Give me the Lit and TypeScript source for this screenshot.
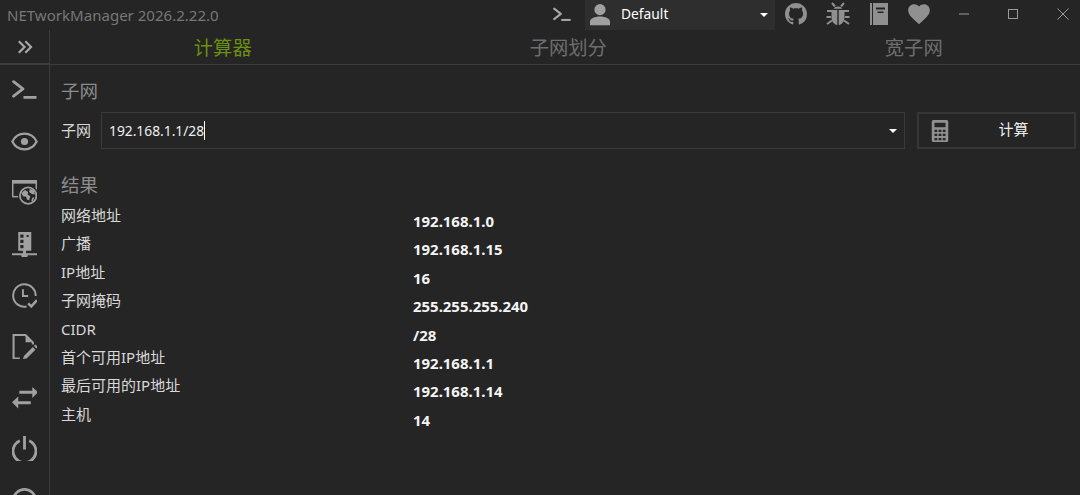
import { LitElement, html, css, svg } from "lit";
import { customElement } from "lit/decorators.js";

const icon = (body: unknown, cls = "", vb = "0 0 24 24") =>
  html`<svg class=${cls} viewBox=${vb} aria-hidden="true">${body}</svg>`;

const consoleIcon = svg`<path d="M1.5 3.5 10.5 10.5 1.5 17.5" fill="none" stroke="currentColor" stroke-width="2.7" stroke-linecap="round" stroke-linejoin="round"/><path d="M11 18.6H23.5" fill="none" stroke="currentColor" stroke-width="2.7"/>`;
const eye = svg`<path d="M1.2 12C3.5 7.3 7.3 5 12 5s8.500 2.300 10.800 7c-2.300 4.700-6.100 7-10.800 7S3.500 16.700 1.200 12Z" fill="none" stroke="currentColor" stroke-width="2"/><circle cx="12" cy="12" r="3.200" fill="currentColor"/>`;
const netGlobe = svg`<path d="M.7 16.500V.7H23.300V9" fill="none" stroke="currentColor" stroke-width="1.400"/><path d="M.7 16H7" fill="none" stroke="currentColor" stroke-width="1.400"/><path d="M0 0H24V3.500H0Z" fill="currentColor"/><circle cx="15.500" cy="15" r="9.800" fill="#252525"/><circle cx="15.500" cy="15" r="7.900" fill="none" stroke="currentColor" stroke-width="1.700"/><path d="M9 12.500l3.500-3 3 2-.5 2.500 2.500 1.500-1 4-2-.5-1-3-3-.5ZM17 8.500l4 1.500 1 4-3-.5-2.500-2ZM19.500 17l2-.5-1.500 4-1.500-.5Z" fill="currentColor"/>`;
const server = svg`<path d="M6 0H18.500V18H13.500V20.300H24V22.300H15A3 3 0 0 1 9 22.300H0V20.300H10.500V18H6ZM8 2.500V5.500H11V2.500ZM14 2.800V4.800H16V2.800ZM8 7.500V10.500H11V7.500ZM8 12.500V15.500H11V12.500Z" fill="currentColor" fill-rule="evenodd"/>`;
const clockCheck = svg`<path d="M14 22.600A10.800 10.800 0 1 1 22.700 12.500" fill="none" stroke="currentColor" stroke-width="1.900"/><path d="M10.500 6V12.500H15.500" fill="none" stroke="currentColor" stroke-width="1.800"/><path d="M15.500 19.500 18.500 22.500 24 16.500" fill="none" stroke="currentColor" stroke-width="2.400"/>`;
const fileEdit = svg`<path d="M7.500 23.500H1.500V1H13L20 8V10" fill="none" stroke="currentColor" stroke-width="2"/><path d="M13 1V8H20Z" fill="currentColor"/><path d="M10.500 24 11.500 21 20 12.500 22.500 15 14 23.500ZM21 11.500 22.500 10 25 12.500 23.500 14Z" fill="currentColor"/>`;
const swap = svg`<path d="M19.500 2V5.500H7V8.500H19.500V12.500L25 7ZM6 11 0 16.500 6 22.500V18.500H18V15.500H6Z" fill="currentColor"/>`;
const power = svg`<path d="M7.500 4.500A11 11 0 1 0 16.500 4.500" fill="none" stroke="currentColor" stroke-width="2.700"/><path d="M12 0V13" fill="none" stroke="currentColor" stroke-width="2.700"/>`;
const info = svg`<circle cx="12" cy="12" r="10.700" fill="none" stroke="currentColor" stroke-width="2.600"/>`;
const chevrons = svg`<path d="M5.590,7.410L7,6L13,12L7,18L5.590,16.590L10.170,12L5.590,7.410M11.590,7.410L13,6L19,12L13,18L11.590,16.590L16.170,12L11.590,7.410Z" fill="currentColor"/>`;
const account = svg`<path d="M12,4A4.500,4.500 0 0,1 16.500,8.500A4.500,4.500 0 0,1 12,13A4.500,4.500 0 0,1 7.500,8.500A4.500,4.500 0 0,1 12,4M12,14C16.420,14 20,15.790 20,18V21H4V18C4,15.790 7.580,14 12,14Z" fill="currentColor"/>`;
const github = svg`<path d="M8 0C3.580 0 0 3.580 0 8c0 3.540 2.290 6.530 5.470 7.590.400.070.550-.170.550-.380 0-.190-.010-.820-.010-1.490-2.010.370-2.530-.490-2.690-.940-.090-.230-.480-.940-.820-1.130-.280-.150-.680-.520-.010-.530.630-.010 1.080.580 1.230.820.720 1.210 1.870.870 2.330.660.070-.520.280-.870.510-1.070-1.780-.200-3.640-.890-3.640-3.950 0-.870.310-1.590.820-2.150-.080-.200-.360-1.020.080-2.120 0 0 .670-.210 2.200.820.640-.180 1.320-.270 2-.270.680 0 1.360.090 2 .270 1.530-1.040 2.200-.820 2.200-.820.440 1.100.160 1.920.080 2.120.510.560.820 1.270.820 2.150 0 3.070-1.870 3.750-3.650 3.950.290.250.540.730.540 1.480 0 1.070-.010 1.930-.010 2.200 0 .210.150.460.550.380A8.013 8.013 0 0016 8c0-4.420-3.580-8-8-8z" fill="currentColor"/>`;
const bug = svg`<path d="M6 1 9 4.500M18 1 15 4.500M1 9H6M23 9H18M.5 15H5M23.500 15H19M1 22 6 18.500M23 22 18 18.500" stroke="currentColor" stroke-width="2" fill="none"/><path d="M7.500 6.800A5 4 0 0 1 16.500 6.800ZM5.500 8H11.300V23C7.500 22.500 5.500 19 5.500 15ZM12.700 8H18.500V15C18.500 19 16.500 22.500 12.700 23Z" fill="currentColor"/>`;
const book = svg`<path d="M3 1H5V23H3ZM6 1H21V23H6ZM9 5.500V7.500H18V5.500ZM10.500 9.500V11H16.500V9.500Z" fill="currentColor" fill-rule="evenodd"/>`;
const heart = svg`<path d="M12,21.350L10.550,20.030C5.400,15.360 2,12.270 2,8.500C2,5.410 4.420,3 7.500,3C9.240,3 10.910,3.810 12,5.080C13.090,3.810 14.760,3 16.500,3C19.580,3 22,5.410 22,8.500C22,12.270 18.600,15.360 13.450,20.030L12,21.350Z" fill="currentColor"/>`;
const calc = svg`<path d="M5 0H19A2 2 0 0 1 21 2V22A2 2 0 0 1 19 24H5A2 2 0 0 1 3 22V2A2 2 0 0 1 5 0ZM6 3V8H18V3ZM6 10.500V13H9V10.500ZM10.500 10.500V13H13.500V10.500ZM15 10.500V13H18V10.500ZM6 15V17.500H9V15ZM10.500 15V17.500H13.500V15ZM15 15V17.500H18V15ZM6 19.500V22H9V19.500ZM10.500 19.500V22H13.500V19.500ZM15 19.500V22H18V19.500Z" fill="currentColor" fill-rule="evenodd"/>`;

const sideIcons: [unknown, string][] = [
  [consoleIcon, ""],
  [eye, "big"],
  [netGlobe, ""],
  [server, ""],
  [clockCheck, ""],
  [fileEdit, ""],
  [swap, ""],
  [power, ""],
  [info, ""],
];

const results: [string, string][] = [
  ["网络地址", "192.168.1.0"],
  ["广播", "192.168.1.15"],
  ["IP地址", "16"],
  ["子网掩码", "255.255.255.240"],
  ["CIDR", "/28"],
  ["首个可用IP地址", "192.168.1.1"],
  ["最后可用的IP地址", "192.168.1.14"],
  ["主机", "14"],
];

@customElement("app-root")
export class AppRoot extends LitElement {
  static styles = css`
    :host {
      display: block;
      width: 1080px;
      height: 495px;
      overflow: hidden;
      background: #252525;
      color: #e6e6e6;
      font-family: "Noto Sans", "Noto Sans CJK SC", sans-serif;
    }
    svg { display: block; }
    .titlebar {
      height: 30px;
      display: flex;
      align-items: center;
      color: #9a9a9a;
    }
    .title {
      width: 552px;
      flex: none;
      padding-left: 7px;
      box-sizing: border-box;
      font-size: 15.05px;
      color: #777;
      white-space: nowrap;
    }
    .tb-console { width: 24px; height: 18px; color: #a8a8a8; margin-right: 11px; margin-left: -2px; flex: none; }
    .profile {
      width: 190px;
      height: 30px;
      background: #2e2e2e;
      display: flex;
      align-items: center;
      box-sizing: border-box;
      color: #fff;
      font-size: 13.800px;
      flex: none;
    }
    .profile .who { width: 30px; height: 30px; color: #a0a0a0; margin-right: 6px; margin-bottom: 2px; }
    .profile .name { flex: 1; margin-bottom: 3px; }
    .caret {
      width: 0; height: 0;
      border-left: 4px solid transparent;
      border-right: 4px solid transparent;
      border-top: 4px solid #fff;
    }
    .profile .caret { margin-right: 7px; }
    .tools { display: flex; align-items: center; margin-left: 10px; margin-bottom: 2px; color: #909090; flex: none; }
    .tools svg { width: 24px; height: 24px; margin-right: 17px; }
    .tools svg.gh { width: 22px; height: 22px; margin-right: 19px; }
    .tools svg.ht { width: 26px; height: 26px; margin-left: -2px; margin-right: 0; }
    .win { display: flex; align-items: center; color: #9a9a9a; margin-left: 27px; margin-bottom: 2px; flex: none; }
    .win svg { width: 10px; height: 10px; margin-right: 39px; }
    .win svg.cl { width: 12px; height: 12px; margin-right: 0; }

    .body { display: flex; height: 465px; }
    .side {
      width: 49px;
      border-right: 1px solid #3c3c3c;
      overflow: hidden;
      flex: none;
    }
    .side-head {
      height: 32px;
      margin-top: 1px;
      border-bottom: 2px solid #3c3c3c;
      display: flex;
      align-items: center;
      justify-content: center;
      color: #a8a8a8;
    }
    .side-head svg { width: 26px; height: 26px; }
    .side-item {
      height: 51.2px;
      display: flex;
      align-items: center;
      justify-content: center;
      color: #a0a0a0;
    }
    .side-item svg { width: 25px; height: 25px; }
    .side-item svg.big { width: 27px; height: 27px; }
    .main { flex: 1; min-width: 0; }
    .tabs {
      display: grid;
      grid-template-columns: repeat(3, 345.5px);
      height: 34px;
      border-bottom: 1px solid #3c3c3c;
      font-size: 19.300px;
      color: #6e6e6e;
      overflow: hidden;
      line-height: 36px;
      text-align: center;
    }
    .tabs .on { color: #6d8f0f; }
    .content { padding: 13px 4px 0 11px; }
    h2 {
      margin: 0;
      font-size: 18.500px;
      font-weight: 400;
      color: #8c8c8c;
      line-height: 25px;
    }
    .form {
      display: flex;
      align-items: stretch;
      margin-top: 9px;
      height: 37px;
      font-size: 15px;
    }
    .form label { width: 40px; line-height: 37px; color: #d8d8d8; flex: none; }
    .combo {
      flex: 1;
      border: 1px solid #3a3a3a;
      display: flex;
      align-items: center;
      padding: 0 7px 0 7px;
      color: #f0f0f0;
      font-size: 13.800px;
    }
    .combo .val { flex: 1; }
    .combo .val span { border-right: 1px solid #fff; }
    .btn {
      width: 159px;
      margin-left: 12px;
      border: 2px solid #363636;
      box-sizing: border-box;
      display: flex;
      align-items: center;
      color: #eee;
    }
    .btn svg { width: 22px; height: 22px; color: #909090; margin-left: 10px; flex: none; }
    .btn span { flex: 1; text-align: center; padding-left: 36px; padding-right: 34px; padding-bottom: 4px; font-size: 15px; white-space: nowrap; }
    h2.res { margin-top: 23px; }
    .grid {
      display: grid;
      grid-template-columns: 352px 1fr;
      grid-auto-rows: 28.4px;
      margin-top: 6px;
      font-size: 15px;
    }
    .k { color: #d8d8d8; line-height: 28.4px; margin-top: -2px; white-space: nowrap; }
    .v { color: #f4f4f4; font-weight: 700; font-size: 14.950px; line-height: 28.4px; margin-top: 4px; }
  `;

  render() {
    return html`
      <div class="titlebar">
        <div class="title">NETworkManager 2026.2.22.0</div>
        ${icon(consoleIcon, "tb-console")}
        <div class="profile">
          ${icon(account, "who")}
          <span class="name">Default</span>
          <span class="caret"></span>
        </div>
        <div class="tools">
          ${icon(github, "gh", "0 0 16 16")}
          ${icon(bug, "bg")}
          ${icon(book, "bk")}
          ${icon(heart, "ht")}
        </div>
        <div class="win">
          <svg viewBox="0 0 10 10"><path d="M0 5H10" stroke="currentColor"/></svg>
          <svg viewBox="0 0 10 10"><rect x=".5" y=".5" width="9" height="9" fill="none" stroke="currentColor"/></svg>
          <svg class="cl" viewBox="0 0 12 12"><path d="M.5 .5 11.500 11.500M11.500 .5 .5 11.500" stroke="currentColor"/></svg>
        </div>
      </div>
      <div class="body">
        <nav class="side">
          <div class="side-head">${icon(chevrons)}</div>
          ${sideIcons.map(([i, c]) => html`<div class="side-item">${icon(i, c)}</div>`)}
        </nav>
        <main class="main">
          <div class="tabs">
            <div class="on">计算器</div>
            <div>子网划分</div>
            <div>宽子网</div>
          </div>
          <div class="content">
            <h2>子网</h2>
            <div class="form">
              <label>子网</label>
              <div class="combo">
                <div class="val"><span>192.168.1.1/28</span></div>
                <i class="caret"></i>
              </div>
              <div class="btn">${icon(calc)}<span>计算</span></div>
            </div>
            <h2 class="res">结果</h2>
            <div class="grid">
              ${results.map(([k, v]) => html`<div class="k">${k}</div><div class="v">${v}</div>`)}
            </div>
          </div>
        </main>
      </div>
    `;
  }
}
